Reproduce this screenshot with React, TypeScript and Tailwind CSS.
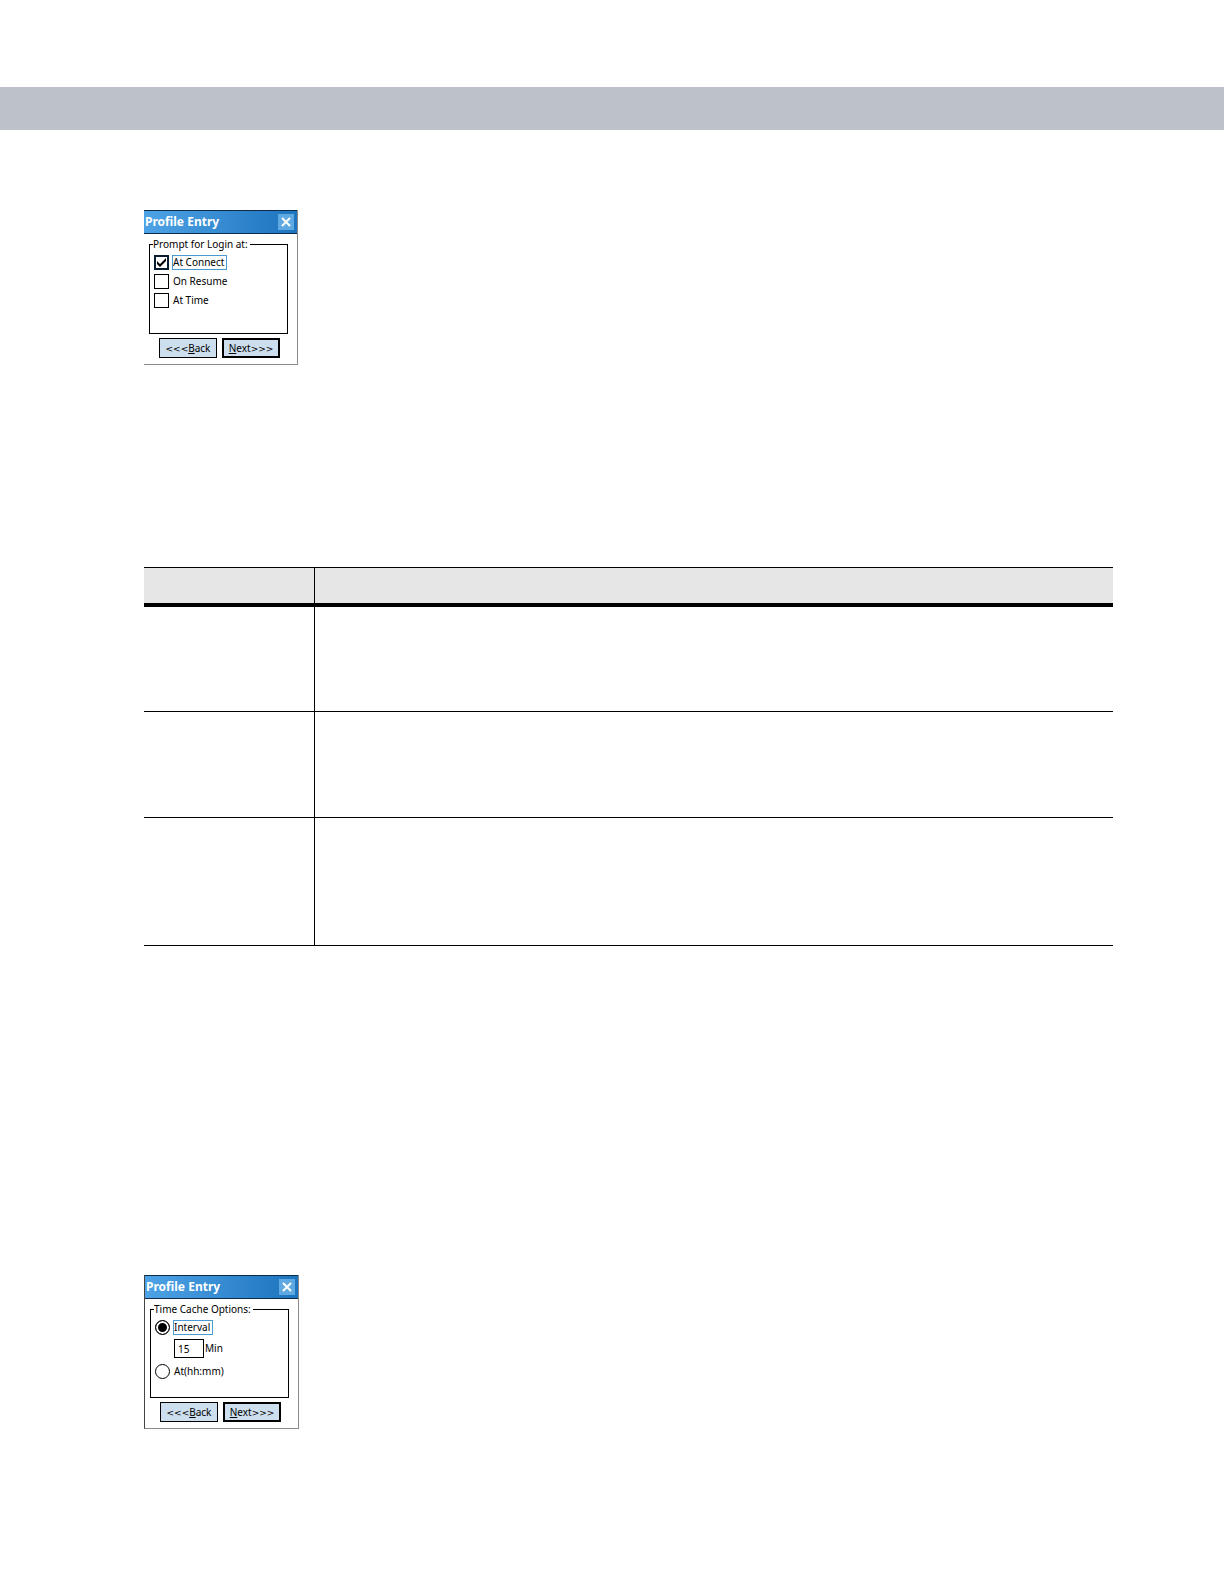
import type { ReactNode } from "react";

// One page of the manual: header band, options table, and the two
// "Profile Entry" dialogs above and below it.

const PROMPTS = [
  { id: "at-connect", label: "At Connect", checked: true },
  { id: "on-resume", label: "On Resume", checked: false },
  { id: "at-time", label: "At Time", checked: false },
];

const ROW_HEIGHTS = ["h-[105px]", "h-[106px]", "h-[128px]"];

function CheckMark() {
  return (
    <svg
      viewBox="0 0 15 15"
      className="pointer-events-none absolute inset-0 hidden h-[15px] w-[15px] peer-checked:block"
      aria-hidden
    >
      <path d="M3 6v3L6 12 12 6V3L6 9z" fill="#000" />
    </svg>
  );
}

function ItemLabel({
  htmlFor,
  focused,
  children,
}: {
  htmlFor: string;
  focused?: boolean;
  children: ReactNode;
}) {
  return (
    <label
      htmlFor={htmlFor}
      className={
        focused
          ? "border border-[#4a9ad4] pr-[2px] leading-[13px]"
          : "border border-transparent pr-[2px] leading-[13px]"
      }
    >
      {children}
    </label>
  );
}

function Dialog({
  className,
  legend,
  children,
}: {
  className: string;
  legend: string;
  children: ReactNode;
}) {
  return (
    <section
      aria-label="Profile Entry"
      className={`border-r border-b border-[#8a8a8a] bg-white font-['Noto_Sans',sans-serif] text-[10px] text-black ${className}`}
    >
      <header className="flex h-6 items-center justify-between border-y border-[#0b2c4c] bg-linear-to-r from-[#4ea3e6] to-[#1b74bd] pr-[3px] pl-px">
        <h2 className="text-[12px] leading-4 font-bold text-white">Profile Entry</h2>
        <button
          type="button"
          aria-label="Close"
          className="flex h-4 w-4 items-center justify-center bg-[#5fa9e2]"
        >
          <svg viewBox="0 0 10 10" className="h-[10px] w-[10px]" aria-hidden>
            <path d="M1 1l8 8M9 1l-8 8" stroke="#fff" strokeWidth="2" />
          </svg>
        </button>
      </header>
      <div className="px-[5px] pt-[3px] pb-[6px]">
        <fieldset className="w-[139px] border border-black pr-1 pl-[3px]">
          <legend className="pr-[2px] leading-[14px]">{legend}</legend>
          <div className="pt-1 pl-px">{children}</div>
        </fieldset>
        <div className="mt-1 flex gap-[5px] pl-[10px]">
          <button
            type="button"
            className="h-5 w-[58px] border border-black bg-[#cddeee] leading-4"
          >
            <span className="font-['DejaVu_Sans',sans-serif] text-[9px]">&lt;&lt;&lt;</span>
            <u>B</u>ack
          </button>
          <button
            type="button"
            className="h-5 w-[58px] border-2 border-black bg-[#cddeee] leading-4"
          >
            <u>N</u>ext
            <span className="font-['DejaVu_Sans',sans-serif] text-[9px]">&gt;&gt;&gt;</span>
          </button>
        </div>
      </div>
    </section>
  );
}

function LoginPromptDialog() {
  return (
    <Dialog className="w-[154px]" legend="Prompt for Login at:">
      <div className="flex flex-col gap-1 pb-[25px]">
        {PROMPTS.map((p) => (
          <div key={p.id} className="flex h-[15px] items-center gap-[3px]">
            <span className="relative h-[15px] w-[15px]">
              <input
                id={p.id}
                type="checkbox"
                defaultChecked={p.checked}
                className="peer block h-[15px] w-[15px] appearance-none border border-black bg-white checked:border-2 checked:border-[#0a1c30]"
              />
              <CheckMark />
            </span>
            <ItemLabel htmlFor={p.id} focused={p.checked}>
              {p.label}
            </ItemLabel>
          </div>
        ))}
      </div>
    </Dialog>
  );
}

function TimeCacheDialog() {
  const radio =
    "block h-[15px] w-[15px] appearance-none rounded-full border border-black bg-white checked:bg-black checked:shadow-[inset_0_0_0_2px_#fff]";
  return (
    <Dialog className="w-[155px] border-l border-l-[#444]" legend="Time Cache Options:">
      <div className="pb-[18px]">
        <div className="flex h-[15px] items-center gap-[3px]">
          <input id="interval" type="radio" name="cache" defaultChecked className={radio} />
          <ItemLabel htmlFor="interval" focused>
            Interval
          </ItemLabel>
        </div>
        <div className="mt-1 flex items-center gap-px pl-[19px]">
          <input
            id="minutes"
            type="text"
            defaultValue="15"
            className="h-[19px] w-[30px] border border-black bg-white px-[3px]"
          />
          <label htmlFor="minutes">Min</label>
        </div>
        <div className="mt-[6px] flex h-[15px] items-center gap-[3px]">
          <input id="at" type="radio" name="cache" className={radio} />
          <ItemLabel htmlFor="at">At(hh:mm)</ItemLabel>
        </div>
      </div>
    </Dialog>
  );
}

export default function App() {
  return (
    <div className="min-h-screen bg-white pt-[87px] pb-[155px]">
      <div className="h-[43px] bg-[#bdc1c9]" />
      <main className="pt-20 pr-[111px] pl-36">
        <LoginPromptDialog />

        <table className="mt-[202px] w-full table-fixed border-separate border-spacing-0">
          <thead>
            <tr className="h-10 bg-[#e6e6e6]">
              <th className="w-[171px] border-t border-r border-b-4 border-black p-0" />
              <th className="border-t border-b-4 border-black p-0" />
            </tr>
          </thead>
          <tbody>
            {ROW_HEIGHTS.map((height) => (
              <tr key={height} className={height}>
                <td className="border-r border-b border-black p-0" />
                <td className="border-b border-black p-0" />
              </tr>
            ))}
          </tbody>
        </table>

        <div className="mt-[329px]">
          <TimeCacheDialog />
        </div>
      </main>
    </div>
  );
}
